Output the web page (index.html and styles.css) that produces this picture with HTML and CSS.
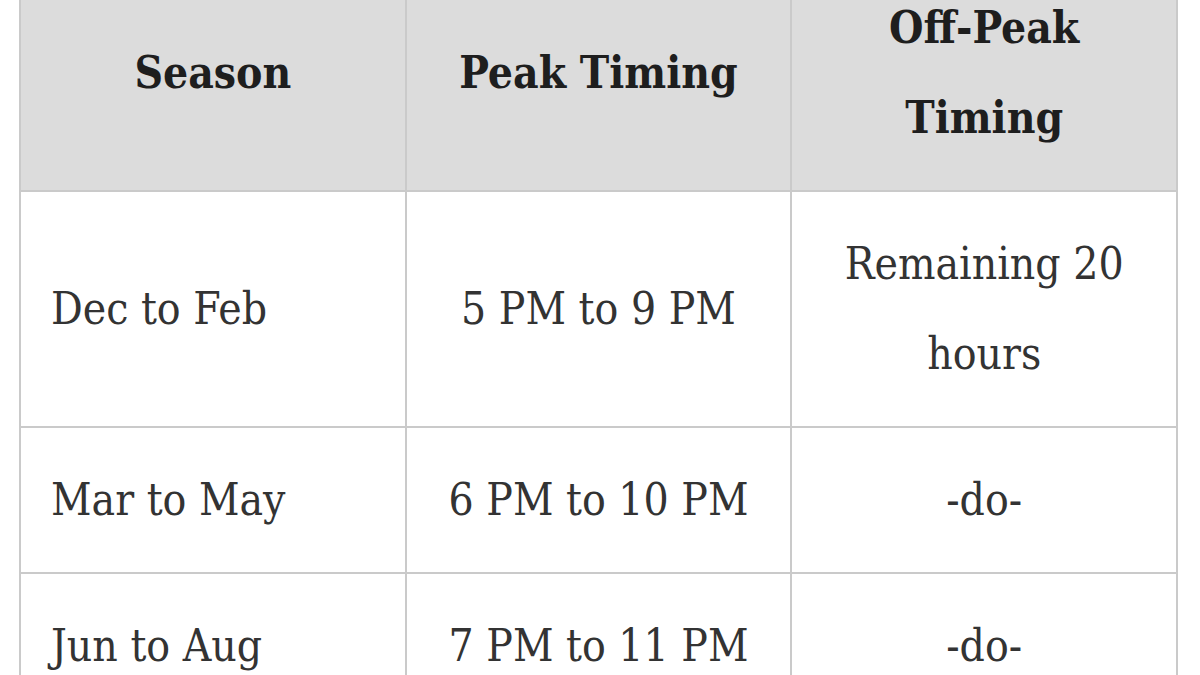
FILE: index.html
```html
<!DOCTYPE html>
<html lang="en">
<head>
<meta charset="utf-8">
<title>Peak timings</title>
<link rel="stylesheet" href="styles.css">
</head>
<body>
<table class="tariff">
  <thead>
    <tr>
      <th>Season</th>
      <th>Peak Timing</th>
      <th>Off-Peak<br>Timing</th>
    </tr>
  </thead>
  <tbody>
    <tr>
      <td class="season">Dec to Feb</td>
      <td>5 PM to 9 PM</td>
      <td>Remaining 20<br>hours</td>
    </tr>
    <tr>
      <td class="season">Mar to May</td>
      <td>6 PM to 10 PM</td>
      <td>-do-</td>
    </tr>
    <tr>
      <td class="season">Jun to Aug</td>
      <td>7 PM to 11 PM</td>
      <td>-do-</td>
    </tr>
  </tbody>
</table>
</body>
</html>
```
FILE: styles.css
```css
html, body {
  margin: 0;
  padding: 0;
  background: #ffffff;
}
body {
  overflow: hidden;
  height: 675px;
}
.tariff {
  margin: -46px 0 0 19px;
  width: 1159px;
  table-layout: fixed;
  border-collapse: collapse;
  font-family: "DejaVu Serif Condensed", "DejaVu Serif", serif;
  font-stretch: condensed;
  font-size: 44px;
  line-height: 90px;
  color: #333333;
}
.tariff th,
.tariff td {
  border: 2px solid #cacaca;
  padding: 27px 20px;
  text-align: center;
  vertical-align: middle;
  white-space: nowrap;
}
.tariff th {
  background: #dcdcdc;
  color: #1e1e1e;
  font-weight: bold;
}
.tariff td.season {
  text-align: left;
  padding-left: 30px;
}
```
